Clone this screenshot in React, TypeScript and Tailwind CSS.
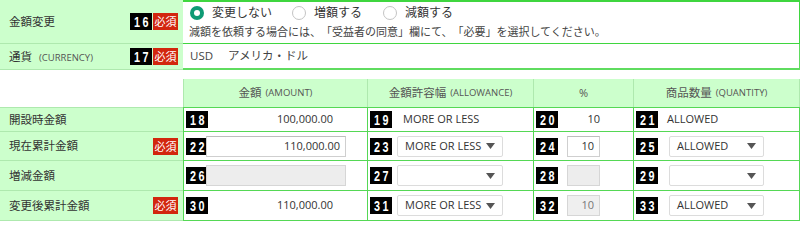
import React from "react";

function Num({ n }: { n: string }) {
  return (
    <span className="inline-flex h-[17px] w-[22px] shrink-0 items-center justify-center overflow-hidden bg-black text-white">
      <span className="inline-block scale-x-[0.72] pl-[3px] font-['Liberation_Sans',Arial,sans-serif] text-[15px] leading-none font-bold tracking-[3.5px]">
        {n}
      </span>
    </span>
  );
}

function Hissu() {
  return (
    <span className="ml-px inline-flex h-[17px] w-[25px] shrink-0 items-center justify-center bg-[#d2260e] text-[11px] leading-none text-white">
      必須
    </span>
  );
}

function Arrow() {
  return (
    <svg width="9" height="6" viewBox="0 0 9 6" className="shrink-0">
      <polygon points="0,0 9,0 4.5,6" fill="#555" />
    </svg>
  );
}

function Select({ w, value }: { w: string; value: string }) {
  return (
    <div
      className={`flex h-[21px] ${w} items-center justify-between rounded-[2px] border border-[#dcdcdc] bg-white pr-[7px] pl-[7px] text-[11px] text-[#333]`}
    >
      <span>{value}</span>
      <Arrow />
    </div>
  );
}

function Radio({ on, label, w }: { on?: boolean; label: string; w: string }) {
  return (
    <div className={`flex ${w} items-center gap-[8px]`}>
      {on ? (
        <span className="flex h-[14px] w-[14px] items-center justify-center rounded-full bg-[#0e9a74]">
          <span className="h-[6px] w-[6px] rounded-full bg-white" />
        </span>
      ) : (
        <span className="h-[14px] w-[14px] rounded-full border-[1.5px] border-[#c4c4c4] bg-white" />
      )}
      <span className="text-[12px] text-[#333]">{label}</span>
    </div>
  );
}

const labelCell =
  "flex items-center bg-[#ccffcc] border-b border-[#aee9ae] pl-[9px] pr-[5px] text-[11.5px] text-[#333]";
const dataCell = "flex items-center border-l border-b border-[#55d855]";

function Label({ text, hissu, extra }: { text: string; hissu?: boolean; extra?: string }) {
  return (
    <div className={`${labelCell} ${extra ?? ""}`}>
      <span className="flex-1">{text}</span>
      {hissu && <Hissu />}
    </div>
  );
}

export default function App() {
  return (
    <div className="h-[222px] w-[800px] overflow-hidden bg-white font-['Open_Sans','Noto_Sans_CJK_JP',sans-serif] text-[11px] text-[#333] [text-spacing-trim:space-all]">
      {/* Top section */}
      <div className="grid grid-cols-[183px_617px]">
        <div className="flex h-[44px] items-center border-b border-[#aee9ae] bg-[#ccffcc] pr-[5px] pl-[9px]">
          <span className="flex-1 text-[11.5px]">金額変更</span>
          <Num n="16" />
          <Hissu />
        </div>
        <div className="flex h-[44px] flex-col border-t-2 border-r border-b border-[#3fd63f] pt-[1px] pl-[6px]">
          <div className="flex h-[19px] items-center pl-px">
            <Radio on label="変更しない" w="w-[102px]" />
            <Radio label="増額する" w="w-[91px]" />
            <Radio label="減額する" w="w-[100px]" />
          </div>
          <div className="flex h-[20px] items-center text-[11px] text-[#444]">
            減額を依頼する場合には、「受益者の同意」欄にて、「必要」を選択してください。
          </div>
        </div>
        <div className="flex h-[26px] items-center border-b border-[#aee9ae] bg-[#ccffcc] pr-[5px] pl-[9px]">
          <span className="flex-1 text-[11.5px]">
            通貨<span className="ml-[7px] text-[9.5px] text-[#555]">(CURRENCY)</span>
          </span>
          <Num n="17" />
          <Hissu />
        </div>
        <div className="flex h-[26px] items-center border-r border-b-2 border-[#5fdc5f] pl-[7px] text-[11.5px] text-[#444]">
          <span>USD</span>
          <span className="ml-[15px]">アメリカ・ドル</span>
        </div>
      </div>

      <div className="h-[9px]" />

      {/* Table */}
      <div className="grid grid-cols-[183px_184px_166px_100px_167px]">
        {/* header */}
        <div className="h-[28px]" />
        <div className="flex h-[28px] items-center justify-center border-l border-[#aee9ae] bg-[#ccffcc] text-[11.5px] text-[#555]">
          金額<span className="ml-[4px] text-[9.5px]">(AMOUNT)</span>
        </div>
        <div className="flex h-[28px] items-center justify-center border-l border-[#aee9ae] bg-[#ccffcc] text-[11.5px] text-[#555]">
          金額許容幅<span className="ml-[4px] text-[9.5px]">(ALLOWANCE)</span>
        </div>
        <div className="flex h-[28px] items-center justify-center border-l border-[#aee9ae] bg-[#ccffcc] text-[11px] text-[#555]">
          %
        </div>
        <div className="flex h-[28px] items-center justify-center border-r border-l border-[#aee9ae] bg-[#ccffcc] text-[11.5px] text-[#555]">
          商品数量<span className="ml-[4px] text-[9.5px]">(QUANTITY)</span>
        </div>

        {/* row 1 */}
        <Label text="開設時金額" extra="h-[25px] border-t" />
        <div className={`${dataCell} h-[25px] border-t pl-[2px]`}>
          <Num n="18" />
          <span className="flex-1 pr-[34px] text-right">100,000.00</span>
        </div>
        <div className={`${dataCell} h-[25px] border-t pl-[2px]`}>
          <Num n="19" />
          <span className="ml-[11px]">MORE OR LESS</span>
        </div>
        <div className={`${dataCell} h-[25px] border-t pl-[2px]`}>
          <Num n="20" />
          <span className="flex-1 pr-[33px] text-right">10</span>
        </div>
        <div className={`${dataCell} h-[25px] border-t border-r pl-[2px]`}>
          <Num n="21" />
          <span className="ml-[9px]">ALLOWED</span>
        </div>

        {/* row 2 */}
        <Label text="現在累計金額" hissu extra="h-[29px]" />
        <div className={`${dataCell} h-[29px] pl-[2px]`}>
          <Num n="22" />
          <div className="-ml-[2px] flex h-[21px] w-[140px] items-center justify-end border border-[#cfcfcf] border-t-[#bdbdbd] bg-white pr-[5px] text-[11px] text-[#333]">
            110,000.00
          </div>
        </div>
        <div className={`${dataCell} h-[29px] pl-[2px]`}>
          <Num n="23" />
          <div className="ml-[5px]">
            <Select w="w-[106px]" value="MORE OR LESS" />
          </div>
        </div>
        <div className={`${dataCell} h-[29px] pl-[2px]`}>
          <Num n="24" />
          <div className="ml-[9px] flex h-[21px] w-[33px] items-center justify-end border border-[#cfcfcf] border-t-[#bdbdbd] bg-white pr-[5px]">
            10
          </div>
        </div>
        <div className={`${dataCell} h-[29px] border-r pl-[2px]`}>
          <Num n="25" />
          <div className="ml-[11px]">
            <Select w="w-[95px]" value="ALLOWED" />
          </div>
        </div>

        {/* row 3 */}
        <Label text="増減金額" extra="h-[30px]" />
        <div className={`${dataCell} h-[30px] pl-[2px]`}>
          <Num n="26" />
          <div className="-ml-[2px] h-[21px] w-[140px] border border-[#d6d6d6] bg-[#ededed]" />
        </div>
        <div className={`${dataCell} h-[30px] pl-[2px]`}>
          <Num n="27" />
          <div className="ml-[5px]">
            <Select w="w-[106px]" value="" />
          </div>
        </div>
        <div className={`${dataCell} h-[30px] pl-[2px]`}>
          <Num n="28" />
          <div className="ml-[9px] h-[21px] w-[33px] border border-[#d6d6d6] bg-[#ededed]" />
        </div>
        <div className={`${dataCell} h-[30px] border-r pl-[2px]`}>
          <Num n="29" />
          <div className="ml-[11px]">
            <Select w="w-[95px]" value="" />
          </div>
        </div>

        {/* row 4 */}
        <Label text="変更後累計金額" hissu extra="h-[30px]" />
        <div className={`${dataCell} h-[30px] pl-[2px]`}>
          <Num n="30" />
          <span className="flex-1 pr-[34px] text-right">110,000.00</span>
        </div>
        <div className={`${dataCell} h-[30px] pl-[2px]`}>
          <Num n="31" />
          <div className="ml-[5px]">
            <Select w="w-[106px]" value="MORE OR LESS" />
          </div>
        </div>
        <div className={`${dataCell} h-[30px] pl-[2px]`}>
          <Num n="32" />
          <div className="ml-[9px] flex h-[21px] w-[33px] items-center justify-end border border-[#d6d6d6] bg-[#efefef] pr-[5px] text-[#777]">
            10
          </div>
        </div>
        <div className={`${dataCell} h-[30px] border-r pl-[2px]`}>
          <Num n="33" />
          <div className="ml-[11px]">
            <Select w="w-[95px]" value="ALLOWED" />
          </div>
        </div>
      </div>
    </div>
  );
}
